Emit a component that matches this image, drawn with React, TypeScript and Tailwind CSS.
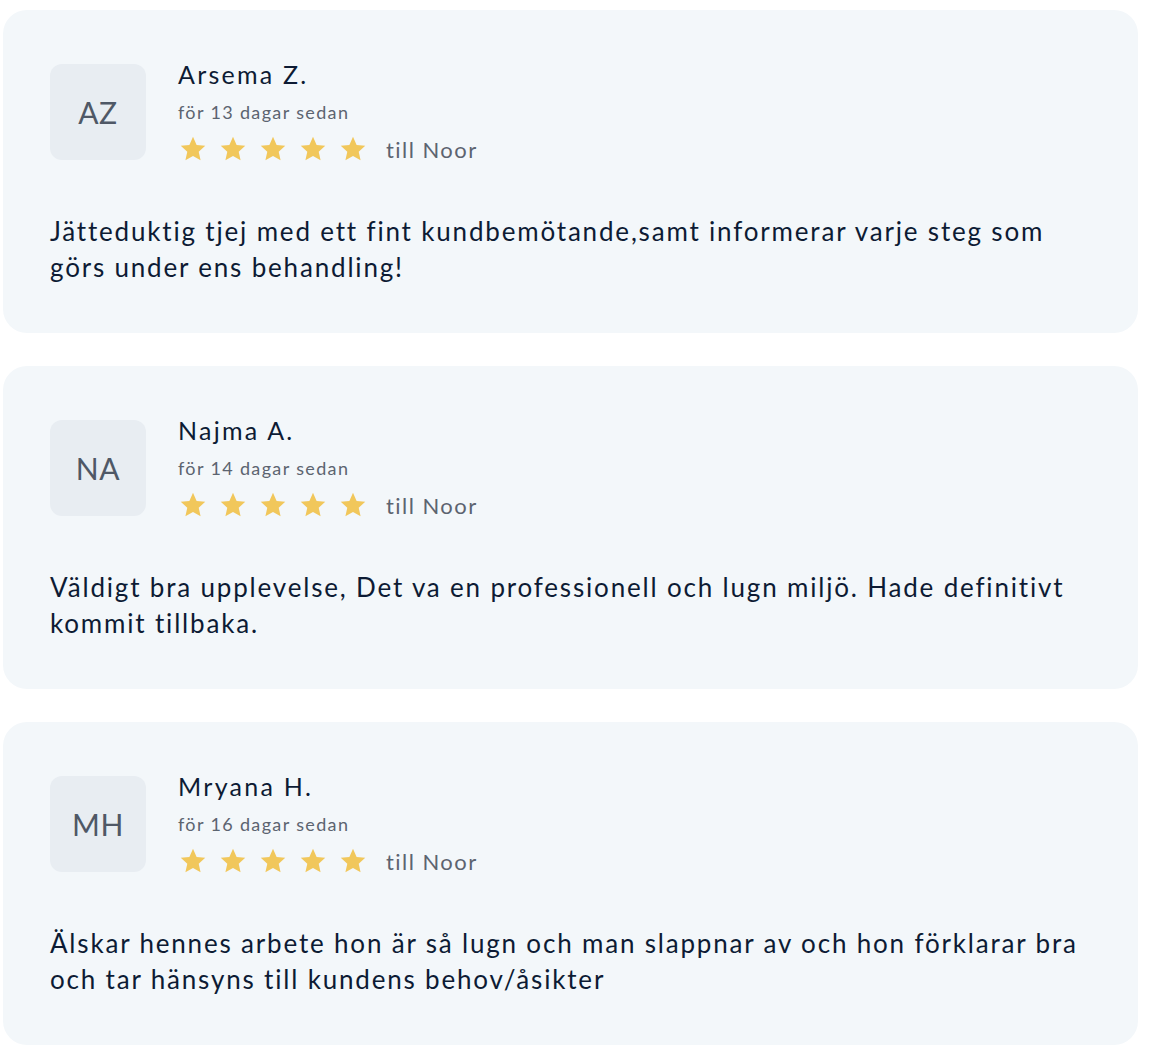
const reviews = [
  {
    initials: 'AZ',
    name: 'Arsema Z.',
    date: 'för 13 dagar sedan',
    text: 'Jätteduktig tjej med ett fint kundbemötande,samt informerar varje steg som görs under ens behandling!',
  },
  {
    initials: 'NA',
    name: 'Najma A.',
    date: 'för 14 dagar sedan',
    text: 'Väldigt bra upplevelse, Det va en professionell och lugn miljö. Hade definitivt kommit tillbaka.',
  },
  {
    initials: 'MH',
    name: 'Mryana H.',
    date: 'för 16 dagar sedan',
    text: 'Älskar hennes arbete hon är så lugn och man slappnar av och hon förklarar bra och tar hänsyns till kundens behov/åsikter',
  },
]

function Star() {
  return (
    <svg width="30" height="28" viewBox="0 0 24 24" className="shrink-0">
      <path
        d="M12 1.6l3.1 6.9 7.4.8-5.6 5 1.6 7.4L12 17.9l-6.5 3.8 1.6-7.4-5.6-5 7.4-.8z"
        fill="#f1c75b"
      />
    </svg>
  )
}

function ReviewCard({ initials, name, date, text }: { initials: string; name: string; date: string; text: string }) {
  return (
    <div className="w-[1135px] rounded-[24px] bg-[#f3f7fa] px-[47px] pt-[54px] pb-[48px]">
      <div className="flex items-start gap-[32px]">
        <div className="w-[96px] h-[96px] rounded-[12px] bg-[#e8edf2] flex items-center justify-center text-[30px] tracking-[0.02em] text-[#4f5866]">
          {initials}
        </div>
        <div className="flex flex-col -mt-[4px]">
          <p className="h-[28px] leading-[28px] text-[25px] tracking-[0.09em] text-[#0d1b34]">{name}</p>
          <p className="mt-[11px] h-[26px] leading-[26px] text-[18px] tracking-[0.075em] text-[#5c6470]">{date}</p>
          <div className="mt-[10px] flex items-center h-[28px]">
            <div className="flex gap-[10px]">
              <Star />
              <Star />
              <Star />
              <Star />
              <Star />
            </div>
            <span className="ml-[18px] text-[22px] tracking-[0.066em] text-[#5c6470]">till Noor</span>
          </div>
        </div>
      </div>
      <p className="mt-[50px] text-[26px] leading-[36px] tracking-[0.07em] text-[#0d1b34]">{text}</p>
    </div>
  )
}

export default function App() {
  return (
    <div className="min-h-screen bg-white pl-[3px] pt-[10px] flex flex-col gap-[33px] font-['Lato',sans-serif]">
      {reviews.map(r => (
        <ReviewCard key={r.initials} {...r} />
      ))}
    </div>
  )
}
